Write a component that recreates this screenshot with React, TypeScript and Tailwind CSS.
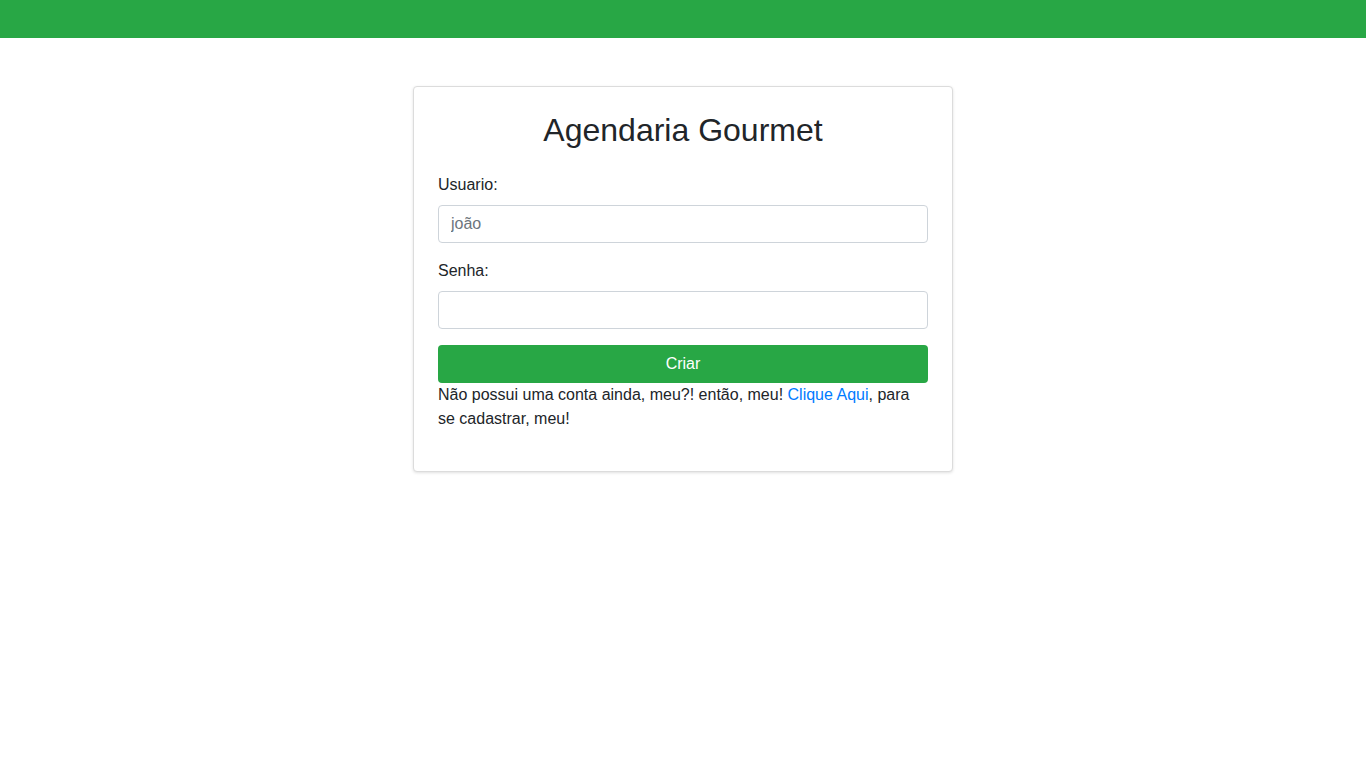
import React from "react";

export default function App() {
  return (
    <div className="min-h-screen bg-white text-[#212529]" style={{ fontFamily: '"Liberation Sans", Arial, sans-serif' }}>
      <div className="h-[38px] bg-[#28a745]" />
      <div className="flex justify-center pt-[48px]">
        <div className="w-[540px] rounded-[4px] border border-[#dcdcdc] bg-white px-[24px] pt-[24px] pb-[24px] shadow-[0_1px_3px_rgba(0,0,0,0.12)]">
          <h2 className="text-center text-[32px] leading-[38px] font-normal mb-[24px]">Agendaria Gourmet</h2>
          <label className="block text-[16px] leading-[24px] mb-[8px]">Usuario:</label>
          <input
            className="block w-full h-[38px] rounded-[4px] border border-[#ced4da] px-[12px] text-[16px] text-[#495057] placeholder:text-[#6c757d] outline-none mb-[16px]"
            placeholder="joão"
          />
          <label className="block text-[16px] leading-[24px] mb-[8px]">Senha:</label>
          <input
            type="password"
            className="block w-full h-[38px] rounded-[4px] border border-[#ced4da] px-[12px] text-[16px] outline-none mb-[16px]"
          />
          <button className="block w-full h-[38px] rounded-[4px] bg-[#28a745] text-white text-[16px]">Criar</button>
          <p className="text-[16px] leading-[24px] mb-[16px]">
            Não possui uma conta ainda, meu?! então, meu! <a className="text-[#007bff]" href="#">Clique Aqui</a>, para se cadastrar, meu!
          </p>
        </div>
      </div>
    </div>
  );
}
